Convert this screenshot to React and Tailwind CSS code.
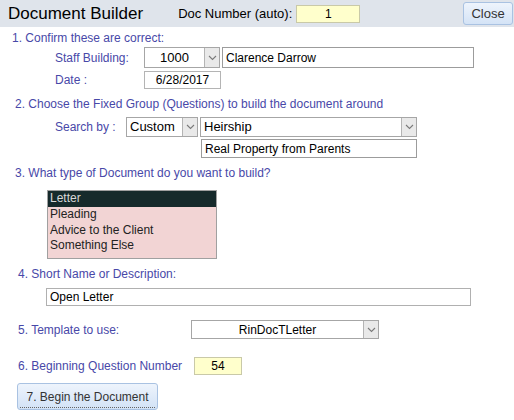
import React from "react";

const Chevron = () => (
  <svg width="9" height="6" viewBox="0 0 9 6" fill="none">
    <path d="M1 1l3.5 3.5L8 1" stroke="#7a7a7a" strokeWidth="1.1" />
  </svg>
);

const Select = ({ value, className = "", align = "left" }) => (
  <div className={`flex bg-white border border-[#a6a6a6] ${className}`}>
    <div className={`flex-1 flex items-center px-[3px] ${align === "center" ? "justify-center" : ""}`}>{value}</div>
    <div className="w-[15px] flex items-center justify-center bg-[#e9e9e9] border-l border-[#b4b4b4]">
      <Chevron />
    </div>
  </div>
);

const Label = ({ children, className = "" }) => (
  <div className={`h-[14px] leading-[14px] text-[#4848a8] ${className}`}>{children}</div>
);

const App = () => {
  return (
    <div className="w-[514px] h-[420px] bg-white text-[12px] text-black overflow-hidden" style={{ fontFamily: '"Liberation Sans", Arial, sans-serif' }}>
      {/* header */}
      <div className="h-[27px] bg-[#dfe4eb] flex items-center">
        <span className="pl-[8px] text-[17px] leading-none">Document Builder</span>
        <span className="ml-[35px] text-[13px]">Doc Number (auto):</span>
        <div className="ml-[4px] w-[64px] h-[18px] bg-[#ffffcc] border border-[#c9c9a8] flex items-center justify-center text-[12px]">1</div>
        <button className="ml-auto mr-[1px] w-[50px] h-[23px] rounded-[3px] border border-[#a9c2e2] bg-gradient-to-b from-[#eef4fc] to-[#d4e3f6] text-[13px] text-[#333]">Close</button>
      </div>

      {/* 1 */}
      <Label className="mt-[4px] pl-[12px]">1. Confirm these are correct:</Label>
      <div className="mt-[2px] flex items-center h-[21px]">
        <Label className="pl-[55px] w-[144px]">Staff Building:</Label>
        <Select value="1000" align="center" className="w-[76px] h-[21px] text-[13px]" />
        <div className="ml-[2px] w-[252px] h-[21px] border border-[#9c9c9c] flex items-center px-[3px]">Clarence Darrow</div>
      </div>
      <div className="mt-[3px] flex items-center h-[18px]">
        <Label className="pl-[55px] w-[144px]">Date :</Label>
        <div className="w-[77px] h-[18px] border border-[#b4b4b4] flex items-center justify-center">6/28/2017</div>
      </div>

      {/* 2 */}
      <Label className="mt-[8px] pl-[15px]">2. Choose the Fixed Group (Questions) to build the document around</Label>
      <div className="mt-[6px] flex items-center h-[20px]">
        <Label className="pl-[55px] w-[126px]">Search by :</Label>
        <Select value="Custom" className="w-[72px] h-[20px] text-[13px]" />
        <Select value="Heirship" className="ml-[2px] w-[217px] h-[20px] text-[13px]" />
      </div>
      <div className="mt-[2px] ml-[201px] w-[216px] h-[19px] border border-[#9c9c9c] flex items-center px-[3px]">Real Property from Parents</div>

      {/* 3 */}
      <Label className="mt-[8px] pl-[15px]">3. What type of Document do you want to build?</Label>
      <div className="mt-[10px] ml-[47px] w-[170px] h-[69px] bg-[#f2d4d4] border border-[#a0a0a0] leading-[15.5px]">
        <div className="h-[16px] bg-[#162a2b] text-[#d8d8d8] px-[2px]">Letter</div>
        <div className="h-[15.5px] px-[2px] text-[#222]">Pleading</div>
        <div className="h-[15.5px] px-[2px] text-[#222]">Advice to the Client</div>
        <div className="h-[15.5px] px-[2px] text-[#222]">Something Else</div>
      </div>

      {/* 4 */}
      <Label className="mt-[8px] pl-[18px]">4. Short Name or Description:</Label>
      <div className="mt-[7px] ml-[46px] w-[425px] h-[18px] border border-[#b0b0b0] flex items-center px-[3px]">Open Letter</div>

      {/* 5 */}
      <div className="mt-[14px] flex items-center h-[19px]">
        <Label className="pl-[18px] w-[191px]">5. Template to use:</Label>
        <Select value="RinDocTLetter" align="center" className="w-[188px] h-[19px] text-[12px]" />
      </div>

      {/* 6 */}
      <div className="mt-[18px] flex items-center h-[18px]">
        <Label className="pl-[18px] w-[194px]">6. Beginning Question Number</Label>
        <div className="w-[48px] h-[18px] bg-[#ffffcc] border border-[#c9c9a8] flex items-center justify-center">54</div>
      </div>

      {/* 7 */}
      <button className="relative mt-[8px] ml-[17px] w-[141px] h-[27px] rounded-[3px] border border-[#a9c2e2] bg-gradient-to-b from-[#eef4fc] to-[#d2e2f6] text-[12px] text-[#333]">
        7. Begin the Document
        <div className="absolute bottom-[1px] left-[2px] right-[2px] border-b border-dotted border-[#666]" />
      </button>
    </div>
  );
};

export default App;
